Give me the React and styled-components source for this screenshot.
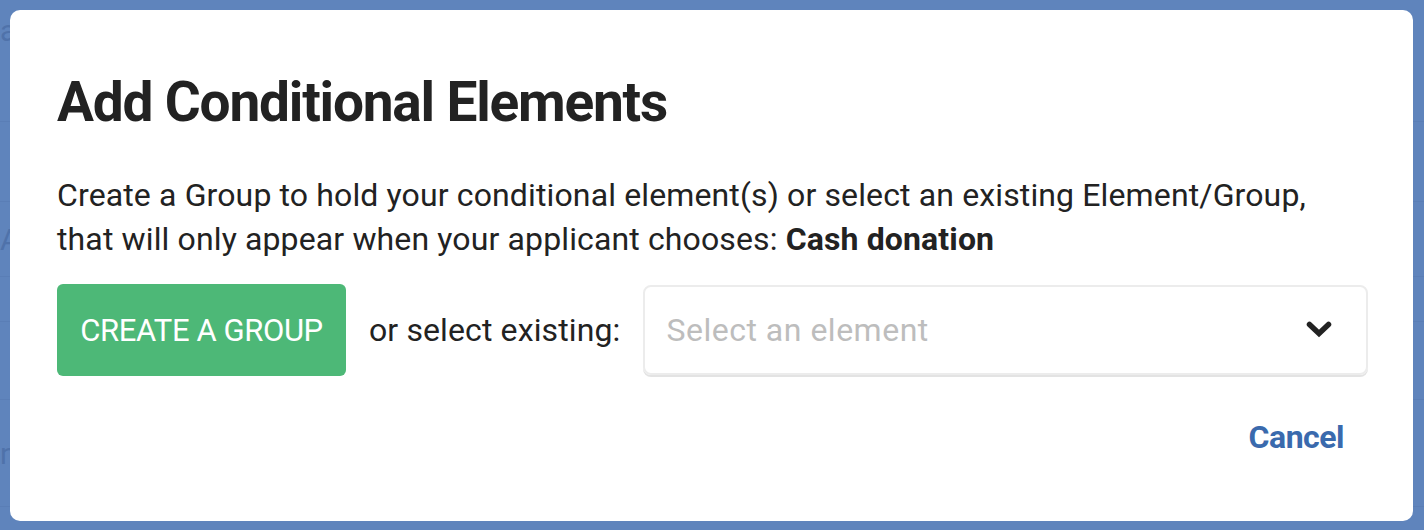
import React from 'react'
import styled, { createGlobalStyle } from 'styled-components'

const GlobalStyle = createGlobalStyle`
  html, body {
    margin: 0;
    padding: 0;
    background: #5f84bc;
  }
  * {
    box-sizing: border-box;
  }
`

const Screen = styled.div`
  position: relative;
  width: 1424px;
  height: 530px;
  overflow: hidden;
  background: #5f84bc;
  font-family: Roboto, 'Liberation Sans', sans-serif;
`

/* faded page that sits behind the overlay */
const BehindPage = styled.div`
  display: flex;
  flex-direction: column;
`

const BehindRow = styled.div`
  height: ${props => props.height}px;
  border-bottom: ${props => (props.line ? '1px solid #5a7eb6' : 'none')};
  display: flex;
  align-items: center;
  color: #4f72aa;
  font-size: 30px;
`

const Overlay = styled.div`
  position: absolute;
  inset: 0;
  padding: 10px 0 0 10px;
`

const Modal = styled.div`
  width: 1403px;
  height: 511px;
  background: #fff;
  border-radius: 10px;
  padding: 60px 45px 0 47px;
  display: flex;
  flex-direction: column;
`

const Title = styled.h2`
  margin: 0;
  font-size: 55px;
  line-height: 64px;
  font-weight: 700;
  letter-spacing: -1.2px;
  color: #222;
`

const Message = styled.p`
  margin: 39px 0 0;
  font-size: 32px;
  line-height: 44px;
  color: #222;
  letter-spacing: 0.13px;
`

const Choice = styled.strong`
  font-weight: 700;
`

const ActionRow = styled.div`
  margin-top: 23px;
  height: 92px;
  display: flex;
  align-items: center;
  gap: 23px;
`

const PrimaryButton = styled.button`
  height: 92px;
  width: 289px;
  flex: none;
  border: none;
  border-radius: 6px;
  background: #4db877;
  color: #fff;
  font-family: inherit;
  font-size: 31px;
  font-weight: 400;
  letter-spacing: -0.4px;
  text-transform: uppercase;
  cursor: pointer;
`

const OrLabel = styled.span`
  font-size: 32px;
  color: #222;
  white-space: nowrap;
  letter-spacing: 0.12px;
`

const SelectBox = styled.div`
  flex: 1;
  height: 90px;
  margin-top: -1px;
  border: 2px solid #ececec;
  border-radius: 8px;
  box-shadow: 0 2px 0 #e3e3e3;
  display: flex;
  align-items: center;
  justify-content: space-between;
  padding: 0 34px 0 21px;
`

const Placeholder = styled.span`
  font-size: 32px;
  color: #bdbdbd;
  letter-spacing: 0.5px;
`

const Footer = styled.div`
  margin-top: 39px;
  display: flex;
  justify-content: flex-end;
`

const TextButton = styled.button`
  border: none;
  background: none;
  padding: 0 24px 0 0;
  font-family: inherit;
  font-size: 32px;
  line-height: 44px;
  font-weight: 700;
  color: #3a6aad;
  letter-spacing: -0.5px;
  cursor: pointer;
`

const Chevron = () => (
  <svg width="26" height="17" viewBox="0 0 26 17">
    <polyline
      points="3.5,3.5 13,12.5 22.5,3.5"
      fill="none"
      stroke="#222"
      strokeWidth="5.5"
      strokeLinecap="round"
      strokeLinejoin="miter"
    />
  </svg>
)

const App = () => (
  <Screen>
    <GlobalStyle />
    <BehindPage>
      <BehindRow height={60}>as</BehindRow>
      <BehindRow height={62} line />
      <BehindRow height={80} line />
      <BehindRow height={75} line>A</BehindRow>
      <BehindRow height={45} line />
      <BehindRow height={78} line />
      <BehindRow height={107} line>nt</BehindRow>
    </BehindPage>
    <Overlay>
      <Modal>
        <Title>Add Conditional Elements</Title>
        <Message>
          Create a Group to hold your conditional element(s) or select an existing Element/Group,
          <br />
          that will only appear when your applicant chooses: <Choice>Cash donation</Choice>
        </Message>
        <ActionRow>
          <PrimaryButton>Create a Group</PrimaryButton>
          <OrLabel>or select existing:</OrLabel>
          <SelectBox>
            <Placeholder>Select an element</Placeholder>
            <Chevron />
          </SelectBox>
        </ActionRow>
        <Footer>
          <TextButton>Cancel</TextButton>
        </Footer>
      </Modal>
    </Overlay>
  </Screen>
)

export default App
